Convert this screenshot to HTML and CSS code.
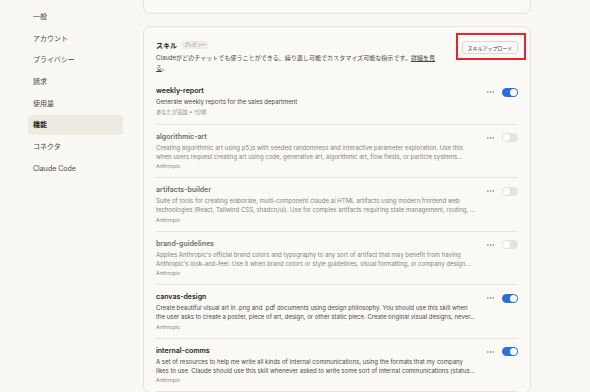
FILE: index.html
```html
<!DOCTYPE html>
<html lang="ja">
<head>
    <meta charset="UTF-8">
    <meta name="viewport" content="width=device-width, initial-scale=1.0">
    <title>設定 - 機能</title>
    <link rel="stylesheet" href="styles.css">
</head>
<body>

    <div class="page">
        <nav class="sidebar">
            <a class="nav-item">一般</a>
            <a class="nav-item">アカウント</a>
            <a class="nav-item">プライバシー</a>
            <a class="nav-item">請求</a>
            <a class="nav-item">使用量</a>
            <a class="nav-item active">機能</a>
            <a class="nav-item">コネクタ</a>
            <a class="nav-item">Claude Code</a>
        </nav>

        <main class="main">
            <div class="top-card"></div>

            <section class="skills-card">
                <div class="skills-header">
                    <div class="skills-intro">
                        <div class="skills-title">
                            <h2>スキル</h2>
                            <span class="badge">プレビュー</span>
                        </div>
                        <p class="skills-desc">Claudeがどのチャットでも使うことができる、繰り返し可能でカスタマイズ可能な指示です。<a class="more-link">詳細を見る</a>。</p>
                    </div>
                    <button class="upload-btn">スキルアップロード</button>
                </div>

                <ul class="skill-list">
                    <li class="skill on">
                        <div class="skill-info">
                            <div class="skill-name">weekly-report</div>
                            <div class="skill-desc">
                                <span>Generate weekly reports for the sales department</span>
                            </div>
                            <div class="skill-meta">あなたが追加 • 1分前</div>
                        </div>
                        <div class="skill-controls">
                            <svg class="dots" viewBox="0 0 8 2"><circle cx="1" cy="1" r="0.8"/><circle cx="4" cy="1" r="0.8"/><circle cx="7" cy="1" r="0.8"/></svg>
                            <span class="toggle"></span>
                        </div>
                    </li>
                    <li class="skill">
                        <div class="skill-info">
                            <div class="skill-name">algorithmic-art</div>
                            <div class="skill-desc">
                                <span>Creating algorithmic art using p5.js with seeded randomness and interactive parameter exploration. Use this</span>
                                <span>when users request creating art using code, generative art, algorithmic art, flow fields, or particle systems…</span>
                            </div>
                            <div class="skill-meta">Anthropic</div>
                        </div>
                        <div class="skill-controls">
                            <svg class="dots" viewBox="0 0 8 2"><circle cx="1" cy="1" r="0.8"/><circle cx="4" cy="1" r="0.8"/><circle cx="7" cy="1" r="0.8"/></svg>
                            <span class="toggle"></span>
                        </div>
                    </li>
                    <li class="skill">
                        <div class="skill-info">
                            <div class="skill-name">artifacts-builder</div>
                            <div class="skill-desc">
                                <span>Suite of tools for creating elaborate, multi-component claude.ai HTML artifacts using modern frontend web</span>
                                <span>technologies (React, Tailwind CSS, shadcn/ui). Use for complex artifacts requiring state management, routing, …</span>
                            </div>
                            <div class="skill-meta">Anthropic</div>
                        </div>
                        <div class="skill-controls">
                            <svg class="dots" viewBox="0 0 8 2"><circle cx="1" cy="1" r="0.8"/><circle cx="4" cy="1" r="0.8"/><circle cx="7" cy="1" r="0.8"/></svg>
                            <span class="toggle"></span>
                        </div>
                    </li>
                    <li class="skill">
                        <div class="skill-info">
                            <div class="skill-name">brand-guidelines</div>
                            <div class="skill-desc">
                                <span>Applies Anthropic's official brand colors and typography to any sort of artifact that may benefit from having</span>
                                <span>Anthropic's look-and-feel. Use it when brand colors or style guidelines, visual formatting, or company design…</span>
                            </div>
                            <div class="skill-meta">Anthropic</div>
                        </div>
                        <div class="skill-controls">
                            <svg class="dots" viewBox="0 0 8 2"><circle cx="1" cy="1" r="0.8"/><circle cx="4" cy="1" r="0.8"/><circle cx="7" cy="1" r="0.8"/></svg>
                            <span class="toggle"></span>
                        </div>
                    </li>
                    <li class="skill on">
                        <div class="skill-info">
                            <div class="skill-name">canvas-design</div>
                            <div class="skill-desc">
                                <span>Create beautiful visual art in .png and .pdf documents using design philosophy. You should use this skill when</span>
                                <span>the user asks to create a poster, piece of art, design, or other static piece. Create original visual designs, never…</span>
                            </div>
                            <div class="skill-meta">Anthropic</div>
                        </div>
                        <div class="skill-controls">
                            <svg class="dots" viewBox="0 0 8 2"><circle cx="1" cy="1" r="0.8"/><circle cx="4" cy="1" r="0.8"/><circle cx="7" cy="1" r="0.8"/></svg>
                            <span class="toggle"></span>
                        </div>
                    </li>
                    <li class="skill on">
                        <div class="skill-info">
                            <div class="skill-name">internal-comms</div>
                            <div class="skill-desc">
                                <span>A set of resources to help me write all kinds of internal communications, using the formats that my company</span>
                                <span>likes to use. Claude should use this skill whenever asked to write some sort of internal communications (status…</span>
                            </div>
                            <div class="skill-meta">Anthropic</div>
                        </div>
                        <div class="skill-controls">
                            <svg class="dots" viewBox="0 0 8 2"><circle cx="1" cy="1" r="0.8"/><circle cx="4" cy="1" r="0.8"/><circle cx="7" cy="1" r="0.8"/></svg>
                            <span class="toggle"></span>
                        </div>
                    </li>
                </ul>
            </section>
        </main>
    </div>

</body>
</html>
```

FILE: styles.css
```css
body {
    font-family: 'Inter', 'Noto Sans CJK JP', sans-serif;
    background-color: #f9f8f4;
    color: #3d3d3a;
    margin: 0;
    height: 392px;
    overflow: hidden;
}
.page {
    display: flex;
    gap: 20px;
    padding-left: 28px;
}

/* --- Sidebar --- */
.sidebar {
    width: 95px;
    padding-top: 7px;
    display: flex;
    flex-direction: column;
    gap: 1.7px;
}
.nav-item {
    height: 20px;
    line-height: 20px;
    padding: 0 5px;
    font-size: 7px;
    color: #4a4945;
    border-radius: 4px;
}
.nav-item.active {
    background-color: #edeae2;
    color: #1f1e1d;
    font-weight: 600;
}

/* --- Main column --- */
.main {
    width: 388px;
    display: flex;
    flex-direction: column;
    gap: 12px;
}
.top-card {
    height: 13px;
    border: 1px solid #e7e4dc;
    border-top: none;
    border-radius: 0 0 7px 7px;
    background-color: #faf9f6;
}
.skills-card {
    border: 1px solid #e7e4dc;
    border-radius: 7px;
    background-color: #faf9f6;
    padding: 12.5px 12px 0;
}
.skills-header {
    display: flex;
    justify-content: space-between;
    align-items: flex-start;
    margin-bottom: 7px;
}
.skills-title {
    display: flex;
    align-items: center;
    gap: 4px;
    height: 11px;
}
.skills-title h2 {
    margin: 0;
    font-size: 7px;
    font-weight: 700;
    color: #1f1e1d;
}
.badge {
    font-size: 4.3px;
    line-height: 6px;
    color: #8a8983;
    background-color: #efece5;
    border-radius: 2px;
    padding: 1px 3px;
}
.skills-desc {
    width: 284px;
    margin: 2.7px 0 0;
    font-size: 6.05px;
    line-height: 9.5px;
    color: #4a4945;
}
.more-link {
    text-decoration: underline;
}
.upload-btn {
    position: relative;
    margin-top: 1.5px;
    width: 56px;
    height: 13px;
    padding: 0;
    font-family: inherit;
    font-size: 5px;
    color: #3d3d3a;
    background-color: #faf9f6;
    border: 1px solid #dcd9d0;
    border-radius: 3px;
}
/* red annotation frame around the button */
.upload-btn::after {
    content: '';
    position: absolute;
    left: -7px;
    right: -9px;
    top: -9px;
    bottom: -7px;
    border: 2.5px solid #e8242f;
}

/* --- Skill rows --- */
.skill-list {
    list-style: none;
    margin: 0;
    padding: 0;
}
.skill {
    display: flex;
    justify-content: space-between;
    align-items: flex-start;
    padding: 6px 0 7px;
    border-bottom: 1px solid #e7e4dc;
}
.skill:first-child {
    padding-bottom: 8px;
}
.skill-name {
    font-size: 7px;
    line-height: 11px;
    font-weight: 600;
    color: #6e6d68;
}
.skill-desc {
    margin-top: 1px;
    font-size: 6.02px;
    line-height: 9px;
    color: #85847e;
}
.skill-desc span {
    display: block;
    white-space: nowrap;
}
.skill-meta {
    margin-top: 1.5px;
    font-size: 5.3px;
    line-height: 8px;
    color: #8a8983;
}
.skill.on .skill-name { color: #1f1e1d; }
.skill.on .skill-desc { color: #4a4945; }

.skill-controls {
    display: flex;
    align-items: center;
    gap: 8px;
    margin-top: 2.8px;
}
.dots {
    width: 7px;
    height: 2px;
    fill: #5a5955;
}
.toggle {
    position: relative;
    width: 16px;
    height: 9px;
    border-radius: 5px;
    background-color: #e6e3db;
}
.toggle::after {
    content: '';
    position: absolute;
    top: 1px;
    left: 1px;
    width: 7px;
    height: 7px;
    border-radius: 50%;
    background-color: white;
}
.skill.on .toggle { background-color: #2d70d8; }
.skill.on .toggle::after { left: 8px; }
```
